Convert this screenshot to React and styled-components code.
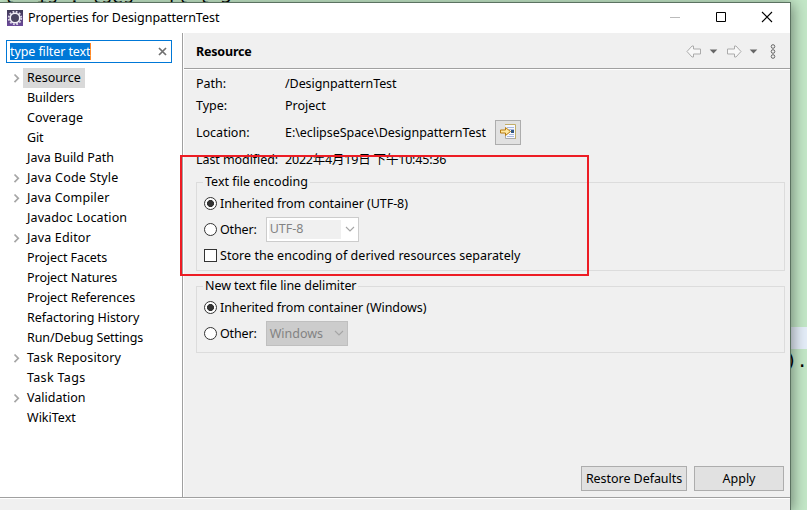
import React from 'react';
import styled, { createGlobalStyle } from 'styled-components';

const Global = createGlobalStyle`
  * { box-sizing: border-box; }
  body { margin: 0; overflow: hidden; background: #c3e7c7; }
`;
const Desktop = styled.div`
  position: relative; width: 807px; height: 510px; overflow: hidden; background: #c3e7c7;
  font: 12.5px/20px "Noto Sans", "Noto Sans CJK SC", sans-serif; color: #000;
`;
const EditorLine = styled.div`
  position: absolute; left: 790px; top: 327px; width: 17px; height: 22px; background: #e4edf8;
`;
const EditorCode = styled.div`
  position: absolute; left: ${p => p.$x}px; top: ${p => p.$y}px; white-space: pre;
  font: 18px/20px "DejaVu Sans Mono", monospace;
`;
const Window = styled.div`
  position: absolute; left: 0; top: 2px; width: 791px; height: 508px;
  display: flex; flex-direction: column;
  border-top: 1px solid #5b7261; border-right: 1px solid #5b7261;
  background: #f0f0f0; box-shadow: 2px 2px 13px rgba(0,0,0,.42);
`;
const TitleBar = styled.header`
  height: 30px; flex: none; display: flex; align-items: center; background: #fff; padding-left: 7px;
`;
const Title = styled.div` flex: 1; margin-left: 5px; letter-spacing: -.03px; white-space: nowrap; `;
const Controls = styled.div`
  width: 138px; display: flex; svg { width: 46px; height: 30px; }
`;
const Body = styled.div` display: flex; height: 464px; flex: none; `;
const Sidebar = styled.aside` width: 182px; background: #fff; padding: 7px 6px 0; `;
const Filter = styled.div`
  width: 166px; height: 23px; border: 1px solid #0078d7; display: flex; align-items: center;
  justify-content: space-between; padding: 0 4px 0 3px;
`;
const Selected = styled.span`
  background: #0078d7; color: #fff; border-right: 1px solid #ff8728; height: 17px; line-height: 17px;
  width: 81px; white-space: nowrap; letter-spacing: -.1px;
`;
const Tree = styled.ul` list-style: none; margin: 5px 0 0; padding: 0; `;
const Node = styled.li` height: 20px; display: flex; align-items: center; padding-left: 6px; `;
const Arrow = styled.svg` width: 8px; height: 10px; margin-right: 3px; `;
const NodeLabel = styled.span`
  padding: 0 4px; white-space: nowrap; letter-spacing: ${p => p.$ls || 0}px;
  background: ${p => (p.$on ? '#d9d9d9' : 'transparent')};
`;
const Main = styled.main`
  flex: 1; display: flex; flex-direction: column; border-left: 1px solid #a0a0a0; box-shadow: inset 1px 0 #fff;
`;
const PageHead = styled.div`
  height: 37px; flex: none; display: flex; align-items: center; padding: 0 12px; margin-left: 1px;
  border-bottom: 1px solid #fff; box-shadow: inset 0 -1px #a0a0a0;
`;
const PageTitle = styled.div` flex: 1; font-weight: 700; letter-spacing: -.2px; padding-top: 2px; `;
const Content = styled.div` flex: 1; display: flex; flex-direction: column; padding: 4px 5px 6px 13px; `;
const Field = styled.div` height: ${p => p.$h}px; display: flex; align-items: center; white-space: nowrap; `;
const FieldName = styled.span` width: 89px; letter-spacing: ${p => p.$ls || 0}px; `;
const Text = styled.span` letter-spacing: ${p => p.$ls || 0}px; white-space: nowrap; `;
const IconButton = styled.button`
  width: 26px; height: 25px; margin: 0 0 2px 9px; padding: 0; border: 1px solid #adadad; background: #e1e1e1;
  display: flex; align-items: center; justify-content: center;
`;
const Group = styled.fieldset`
  min-width: 0; height: ${p => p.$h}px; margin: ${p => p.$top}px 0 0; border: 1px solid #dcdcdc; padding: 0 0 0 7px;
`;
const Legend = styled.legend`
  height: 20px; padding: 0 2px; margin: 0 0 -1px -1px; letter-spacing: ${p => p.$ls || 0}px;
`;
const Option = styled.div` height: 26px; display: flex; align-items: center; gap: 3px; `;
const Radio = styled.span`
  width: 13px; height: 13px; flex: none; margin-bottom: 2px; border: 1px solid #333; border-radius: 50%;
  background: ${p => (p.$on ? 'radial-gradient(circle, #333 0 3.2px, #fff 3.8px)' : '#fff')};
`;
const Check = styled.span`
  width: 13px; height: 13px; flex: none; margin-bottom: 2px; border: 1px solid #333; background: #fff;
`;
const Combo = styled.div`
  width: ${p => p.$w}px; height: 25px; margin: 0 0 2px 6px; display: flex; align-items: center; justify-content: space-between;
  padding: 0 3px 0 2px; border: 1px solid ${p => (p.$flat ? '#bfbfbf' : '#ccc')};
  background: ${p => (p.$flat ? '#ccc' : '#fff')}; color: #838383;
`;
const ComboValue = styled.span`
  width: ${p => p.$w}px; height: 19px; line-height: ${p => p.$lh}px; padding-left: 1px; background: ${p => p.$bg};
`;
const Actions = styled.div`
  display: flex; justify-content: flex-end; gap: 7px; margin: auto 1px 0 0;
`;
const Button = styled.button`
  width: ${p => p.$w}px; height: 25px; padding: 0; border: 1px solid #adadad; background: #e1e1e1; color: #000;
  font: inherit; line-height: 20px; letter-spacing: ${p => p.$ls || 0}px; white-space: nowrap;
`;
const Footer = styled.footer` flex: 1; border-top: 1px solid #a0a0a0; box-shadow: inset 0 1px #fff; `;
const Highlight = styled.div`
  position: absolute; left: 180px; top: 155px; width: 409px; height: 121px; border: 2px solid #ed1c24;
`;

const nodes = [
  { name: 'Resource', parent: true, ls: -0.05 },
  { name: 'Builders', ls: -0.1 },
  { name: 'Coverage', ls: 0.1 },
  { name: 'Git', ls: -0.2 },
  { name: 'Java Build Path' },
  { name: 'Java Code Style', parent: true, ls: 0.2 },
  { name: 'Java Compiler', parent: true, ls: 0.15 },
  { name: 'Javadoc Location', ls: 0.11 },
  { name: 'Java Editor', parent: true, ls: 0.16 },
  { name: 'Project Facets', ls: -0.07 },
  { name: 'Project Natures', ls: -0.04 },
  { name: 'Project References', ls: -0.05 },
  { name: 'Refactoring History', ls: -0.06 },
  { name: 'Run/Debug Settings', ls: -0.1 },
  { name: 'Task Repository', parent: true, ls: 0.15 },
  { name: 'Task Tags', ls: 0.33 },
  { name: 'Validation', parent: true },
  { name: 'WikiText' },
];

const EclipseIcon = () => (
  <svg width="16" height="16" viewBox="0 0 16 16">
    <defs>
      <linearGradient id="plate" x1="0" y1="0" x2="0" y2="1">
        <stop offset="0" stopColor="#3f3a55" /><stop offset="1" stopColor="#6c4a9c" />
      </linearGradient>
    </defs>
    <rect width="16" height="16" fill="url(#plate)" />
    <circle cx="8" cy="8" r="6.3" fill="none" stroke="#dcd8e6" strokeWidth="1.8" strokeDasharray="1.8 1.5" />
    <circle cx="8" cy="8" r="4.8" fill="#4a4560" stroke="#f4f2f8" strokeWidth="1.6" />
  </svg>
);
const Chevron = () => (
  <svg width="10" height="6" viewBox="0 0 10 6"><path d="M1 1l4 4 4-4" fill="none" stroke="#a5a5a5" strokeWidth="1.1" /></svg>
);
const NavIcons = () => (
  <svg width="92" height="17" viewBox="0 0 92 17">
    <g fill="#f8f8f8" stroke="#ababab">
      <path d="M1 8.5L6 3h1.5v3h7v5h-7v3H6z" />
      <path d="M55 8.5L50 3h-1.5v3h-7v5h7v3H50z" />
    </g>
    <path d="M23.7 6.6h7.6l-3.8 4zM63.7 6.6h7.6l-3.8 4z" fill="#666" />
    <g fill="none" stroke="#666"><circle cx="87" cy="3.5" r="1.8" /><circle cx="87" cy="8.5" r="1.8" /><circle cx="87" cy="13.5" r="1.8" /></g>
  </svg>
);
const LocateIcon = () => (
  <svg width="16" height="16" viewBox="0 0 16 16">
    <path d="M5.5.5h10v14h-10z" fill="#f5f8ff" />
    <path d="M5 .5h10.5V15" fill="none" stroke="#c2ad68" />
    <path d="M5.5 11v3.5H15" fill="none" stroke="#a9a9a9" />
    <path d="M7 3.5h7M9 5.5h5M9 10.5h5M7 12.5h7" stroke="#a8b8de" />
    <path d="M.5 6h5V3.5l5 4-5 4V9h-5z" fill="#ffe8a0" stroke="#b77b10" />
    <path d="M11 6h3v3h-3z" fill="#315784" />
  </svg>
);

export default function App() {
  return (
    <Desktop>
      <Global />
      <EditorCode $x={4} $y={-13}>{'t  is . lses   fl t 5'}</EditorCode>
      <EditorLine />
      <EditorCode $x={786} $y={351}>).</EditorCode>
      <Window>
        <TitleBar>
          <EclipseIcon />
          <Title>Properties for DesignpatternTest</Title>
          <Controls>
            <svg viewBox="0 0 46 30"><path d="M18 14.5h10" stroke="#bbb" /></svg>
            <svg viewBox="0 0 46 30"><path d="M18.5 9.5h9v9h-9z" fill="none" stroke="#000" /></svg>
            <svg viewBox="0 0 46 30"><path d="M18 9l10 10M28 9L18 19" stroke="#000" strokeWidth="1.1" /></svg>
          </Controls>
        </TitleBar>
        <Body>
          <Sidebar>
            <Filter>
              <Selected>type filter text</Selected>
              <svg width="9" height="9" viewBox="0 0 9 9"><path d="M1 1l7 7M8 1L1 8" stroke="#707070" strokeWidth="1.7" /></svg>
            </Filter>
            <Tree>
              {nodes.map(({ name, parent, ls }, i) => (
                <Node key={name}>
                  <Arrow viewBox="0 0 8 10">{parent && <path d="M2.5 1.5L6.3 5.3l-3.8 3.8" fill="none" stroke="#a6a6a6" strokeWidth="1.7" />}</Arrow>
                  <NodeLabel $on={i === 0} $ls={ls}>{name}</NodeLabel>
                </Node>
              ))}
            </Tree>
          </Sidebar>
          <Main>
            <PageHead><PageTitle>Resource</PageTitle><NavIcons /></PageHead>
            <Content>
              <Field $h={20}><FieldName>Path:</FieldName><Text $ls={-0.07}>/DesignpatternTest</Text></Field>
              <Field $h={24}><FieldName>Type:</FieldName><Text>Project</Text></Field>
              <Field $h={30}><FieldName>Location:</FieldName><Text $ls={-0.05}>E:\eclipseSpace\DesignpatternTest</Text><IconButton><LocateIcon /></IconButton></Field>
              <Field $h={24}><FieldName $ls={-0.07}>Last modified:</FieldName><Text $ls={-0.2}>2022年4月19日 下午10:45:36</Text></Field>
              <Group $h={99} $top={0}>
                <Legend>Text file encoding</Legend>
                <Option><Radio $on /><Text $ls={-0.06}>Inherited from container (UTF-8)</Text></Option>
                <Option><Radio /><Text $ls={-0.15}>Other:</Text><Combo $w={93}><ComboValue $w={72} $lh={18} $bg="#f0f0f0">UTF-8</ComboValue><Chevron /></Combo></Option>
                <Option><Check /><Text $ls={0.04}>Store the encoding of derived resources separately</Text></Option>
              </Group>
              <Group $h={77} $top={5}>
                <Legend $ls={-0.07}>New text file line delimiter</Legend>
                <Option><Radio $on /><Text $ls={-0.09}>Inherited from container (Windows)</Text></Option>
                <Option><Radio /><Text $ls={-0.15}>Other:</Text><Combo $w={82} $flat><ComboValue $w={60} $lh={20} $bg="transparent">Windows</ComboValue><Chevron /></Combo></Option>
              </Group>
              <Actions><Button $w={106} $ls={-0.05}>Restore Defaults</Button><Button $w={90}>Apply</Button></Actions>
            </Content>
          </Main>
        </Body>
        <Footer />
      </Window>
      <Highlight />
    </Desktop>
  );
}
